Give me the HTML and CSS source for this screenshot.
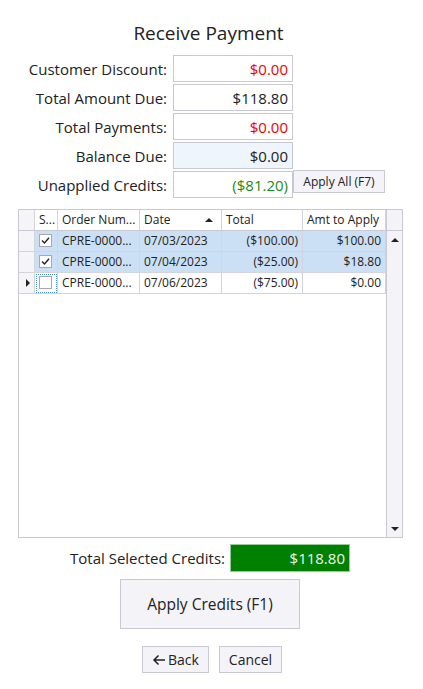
FILE: index.html
```html
<!DOCTYPE html>
<html>
<head>
<meta charset="utf-8">
<link rel="stylesheet" href="styles.css">
</head>
<body>
<div class="page">
  <h1 class="title">Receive Payment</h1>
  <div class="fields">
    <div class="field-row">
      <span class="label">Customer Discount:</span>
      <span class="box red">$0.00</span>
    </div>
    <div class="field-row">
      <span class="label">Total Amount Due:</span>
      <span class="box">$118.80</span>
    </div>
    <div class="field-row">
      <span class="label">Total Payments:</span>
      <span class="box red">$0.00</span>
    </div>
    <div class="field-row">
      <span class="label">Balance Due:</span>
      <span class="box tinted">$0.00</span>
    </div>
    <div class="field-row">
      <span class="label">Unapplied Credits:</span>
      <span class="box green">($81.20)</span>
      <button class="btn small">Apply All (F7)</button>
    </div>
  </div>

  <div class="grid">
    <div class="grid-main">
      <div class="grow head">
        <div class="c c-rh"></div>
        <div class="c c-s">S...</div>
        <div class="c c-o">Order Num...</div>
        <div class="c c-d">Date<span class="sort"></span></div>
        <div class="c c-t">Total</div>
        <div class="c c-a">Amt to Apply</div>
      </div>
      <div class="grow sel">
        <div class="c c-rh"></div>
        <div class="c c-s"><span class="chk"><svg width="11" height="11" viewBox="0 0 11 11"><path d="M2 5.5 L4.5 8 L9 2.8" fill="none" stroke="#222" stroke-width="1.4"/></svg></span></div>
        <div class="c c-o">CPRE-0000...</div>
        <div class="c c-d">07/03/2023</div>
        <div class="c c-t num">($100.00)</div>
        <div class="c c-a num">$100.00</div>
      </div>
      <div class="grow sel">
        <div class="c c-rh"></div>
        <div class="c c-s"><span class="chk"><svg width="11" height="11" viewBox="0 0 11 11"><path d="M2 5.5 L4.5 8 L9 2.8" fill="none" stroke="#222" stroke-width="1.4"/></svg></span></div>
        <div class="c c-o">CPRE-0000...</div>
        <div class="c c-d">07/04/2023</div>
        <div class="c c-t num">($25.00)</div>
        <div class="c c-a num">$18.80</div>
      </div>
      <div class="grow">
        <div class="c c-rh"><span class="pointer"></span></div>
        <div class="c c-s focus"><span class="chk"></span></div>
        <div class="c c-o">CPRE-0000...</div>
        <div class="c c-d">07/06/2023</div>
        <div class="c c-t num">($75.00)</div>
        <div class="c c-a num">$0.00</div>
      </div>
    </div>
    <div class="scroll">
      <div class="scroll-head"></div>
      <div class="scroll-track">
        <span class="arr up"></span>
        <span class="arr down"></span>
      </div>
    </div>
  </div>

  <div class="total-row">
    <span class="total-label">Total Selected Credits:</span>
    <span class="total-box">$118.80</span>
  </div>

  <div class="apply-wrap">
    <button class="btn big">Apply Credits (F1)</button>
  </div>

  <div class="nav">
    <button class="btn nav-btn back"><svg width="14" height="12" viewBox="0 0 14 12"><path d="M13 6 H2 M6.5 1.5 L2 6 L6.5 10.5" fill="none" stroke="#222" stroke-width="1.5"/></svg>Back</button>
    <button class="btn nav-btn cancel">Cancel</button>
  </div>
</div>
</body>
</html>
```

FILE: styles.css
```css
* { box-sizing: border-box; }
html, body { margin: 0; padding: 0; background: #fff; }
body {
  font-family: "Open Sans", "Noto Sans", "DejaVu Sans", sans-serif;
  color: #222;
  width: 423px;
}
.page { padding-top: 20px; }
.title {
  margin: 0;
  font-weight: 400;
  font-size: 19px;
  line-height: 26px;
  text-align: center;
  padding-right: 6px;
  color: #222;
}
.fields {
  margin-top: 9px;
  display: flex;
  flex-direction: column;
  gap: 2px;
}
.field-row {
  display: flex;
  align-items: flex-start;
  height: 27px;
}
.label {
  width: 168px;
  text-align: right;
  font-size: 15px;
  line-height: 28px;
  padding-right: 1px;
  white-space: nowrap;
}
.box {
  margin-left: 5px;
  width: 120px;
  height: 27px;
  border: 1px solid #c9c9d6;
  text-align: right;
  padding-right: 4px;
  font-size: 15px;
  line-height: 26px;
  background: #fff;
}
.box.red { color: #f00000; }
.box.green { color: #1a8c1a; }
.box.tinted { background: #eef5fd; }
.btn {
  font-family: inherit;
  background: #f4f4f8;
  border: 1px solid #c9c9d6;
  color: #222;
  padding: 0;
  margin: 0;
}
.btn.small {
  width: 92px;
  height: 23px;
  font-size: 12px;
  margin-top: -1px;
}
.grid {
  margin: 11px 0 0 18px;
  width: 385px;
  height: 329px;
  border: 1px solid #c9c9d6;
  display: flex;
}
.grid-main { width: 367px; }
.grow {
  display: flex;
  height: 21px;
  font-size: 12px;
}
.grow.head { height: 21px; background: #fff; }
.c {
  border-right: 1px solid #d4d4de;
  border-bottom: 1px solid #d4d4de;
  padding: 0 4px;
  line-height: 20px;
  white-space: nowrap;
  overflow: hidden;
  position: relative;
}
.head .c { border-bottom-color: #c9c9d6; }
.c-rh { width: 16px; background: #f5f5f8; padding: 0; }
.c-s { width: 23px; padding: 0 3px; }
.c-o { width: 82px; }
.c-d { width: 82px; }
.c-t { width: 81px; }
.c-a { width: 83px; }
.num { text-align: right; }
.sel .c { background: #cce0f5; }
.sel .c-rh { background: #f5f5f8; }
.head .c-s { padding: 0 4px; }
.sort {
  position: absolute;
  right: 8px;
  top: 8px;
  width: 0; height: 0;
  border-left: 4px solid transparent;
  border-right: 4px solid transparent;
  border-bottom: 4px solid #222;
}
.chk {
  display: flex;
  align-items: center;
  justify-content: center;
  width: 13px;
  height: 13px;
  margin: 3px 0 0 1px;
  background: #fff;
  border: 1px solid #a8a8b4;
}
.focus { outline: 1px dotted #4a90d9; outline-offset: -2px; }
.pointer {
  position: absolute;
  left: 7px;
  top: 6px;
  width: 0; height: 0;
  border-top: 4px solid transparent;
  border-bottom: 4px solid transparent;
  border-left: 4px solid #222;
}
.scroll {
  width: 16px;
  display: flex;
  flex-direction: column;
  background: #f4f4f8;
  border-left: 1px solid #c9c9d6;
}
.scroll-head { height: 21px; border-bottom: 1px solid #c9c9d6; margin-left: -1px; }
.scroll-track {
  flex: 1;
  display: flex;
  flex-direction: column;
  justify-content: space-between;
  align-items: center;
  padding: 7px 0 6px;
}
.arr { width: 0; height: 0; border-left: 4px solid transparent; border-right: 4px solid transparent; }
.arr.up { border-bottom: 4px solid #222; }
.arr.down { border-top: 4px solid #222; }
.total-row {
  margin-top: 6px;
  display: flex;
  justify-content: center;
  align-items: center;
  height: 28px;
  padding-right: 3px;
}
.total-label { font-size: 15px; margin-right: 5px; }
.total-box {
  width: 120px;
  height: 28px;
  background: #008000;
  border: 1px solid #9ac89a;
  color: #eef6ee;
  text-align: right;
  padding-right: 4px;
  font-size: 15px;
  line-height: 26px;
}
.apply-wrap {
  margin-top: 7px;
  display: flex;
  justify-content: center;
  padding-right: 3px;
}
.btn.big {
  width: 180px;
  height: 50px;
  font-size: 15.5px;
}
.nav {
  margin-top: 17px;
  display: flex;
  justify-content: center;
  gap: 10px;
  padding-left: 1px;
}
.nav-btn {
  height: 27px;
  font-size: 14px;
  display: flex;
  align-items: center;
  justify-content: center;
  gap: 2px;
}
.back { width: 67px; }
.cancel { width: 63px; }
```
